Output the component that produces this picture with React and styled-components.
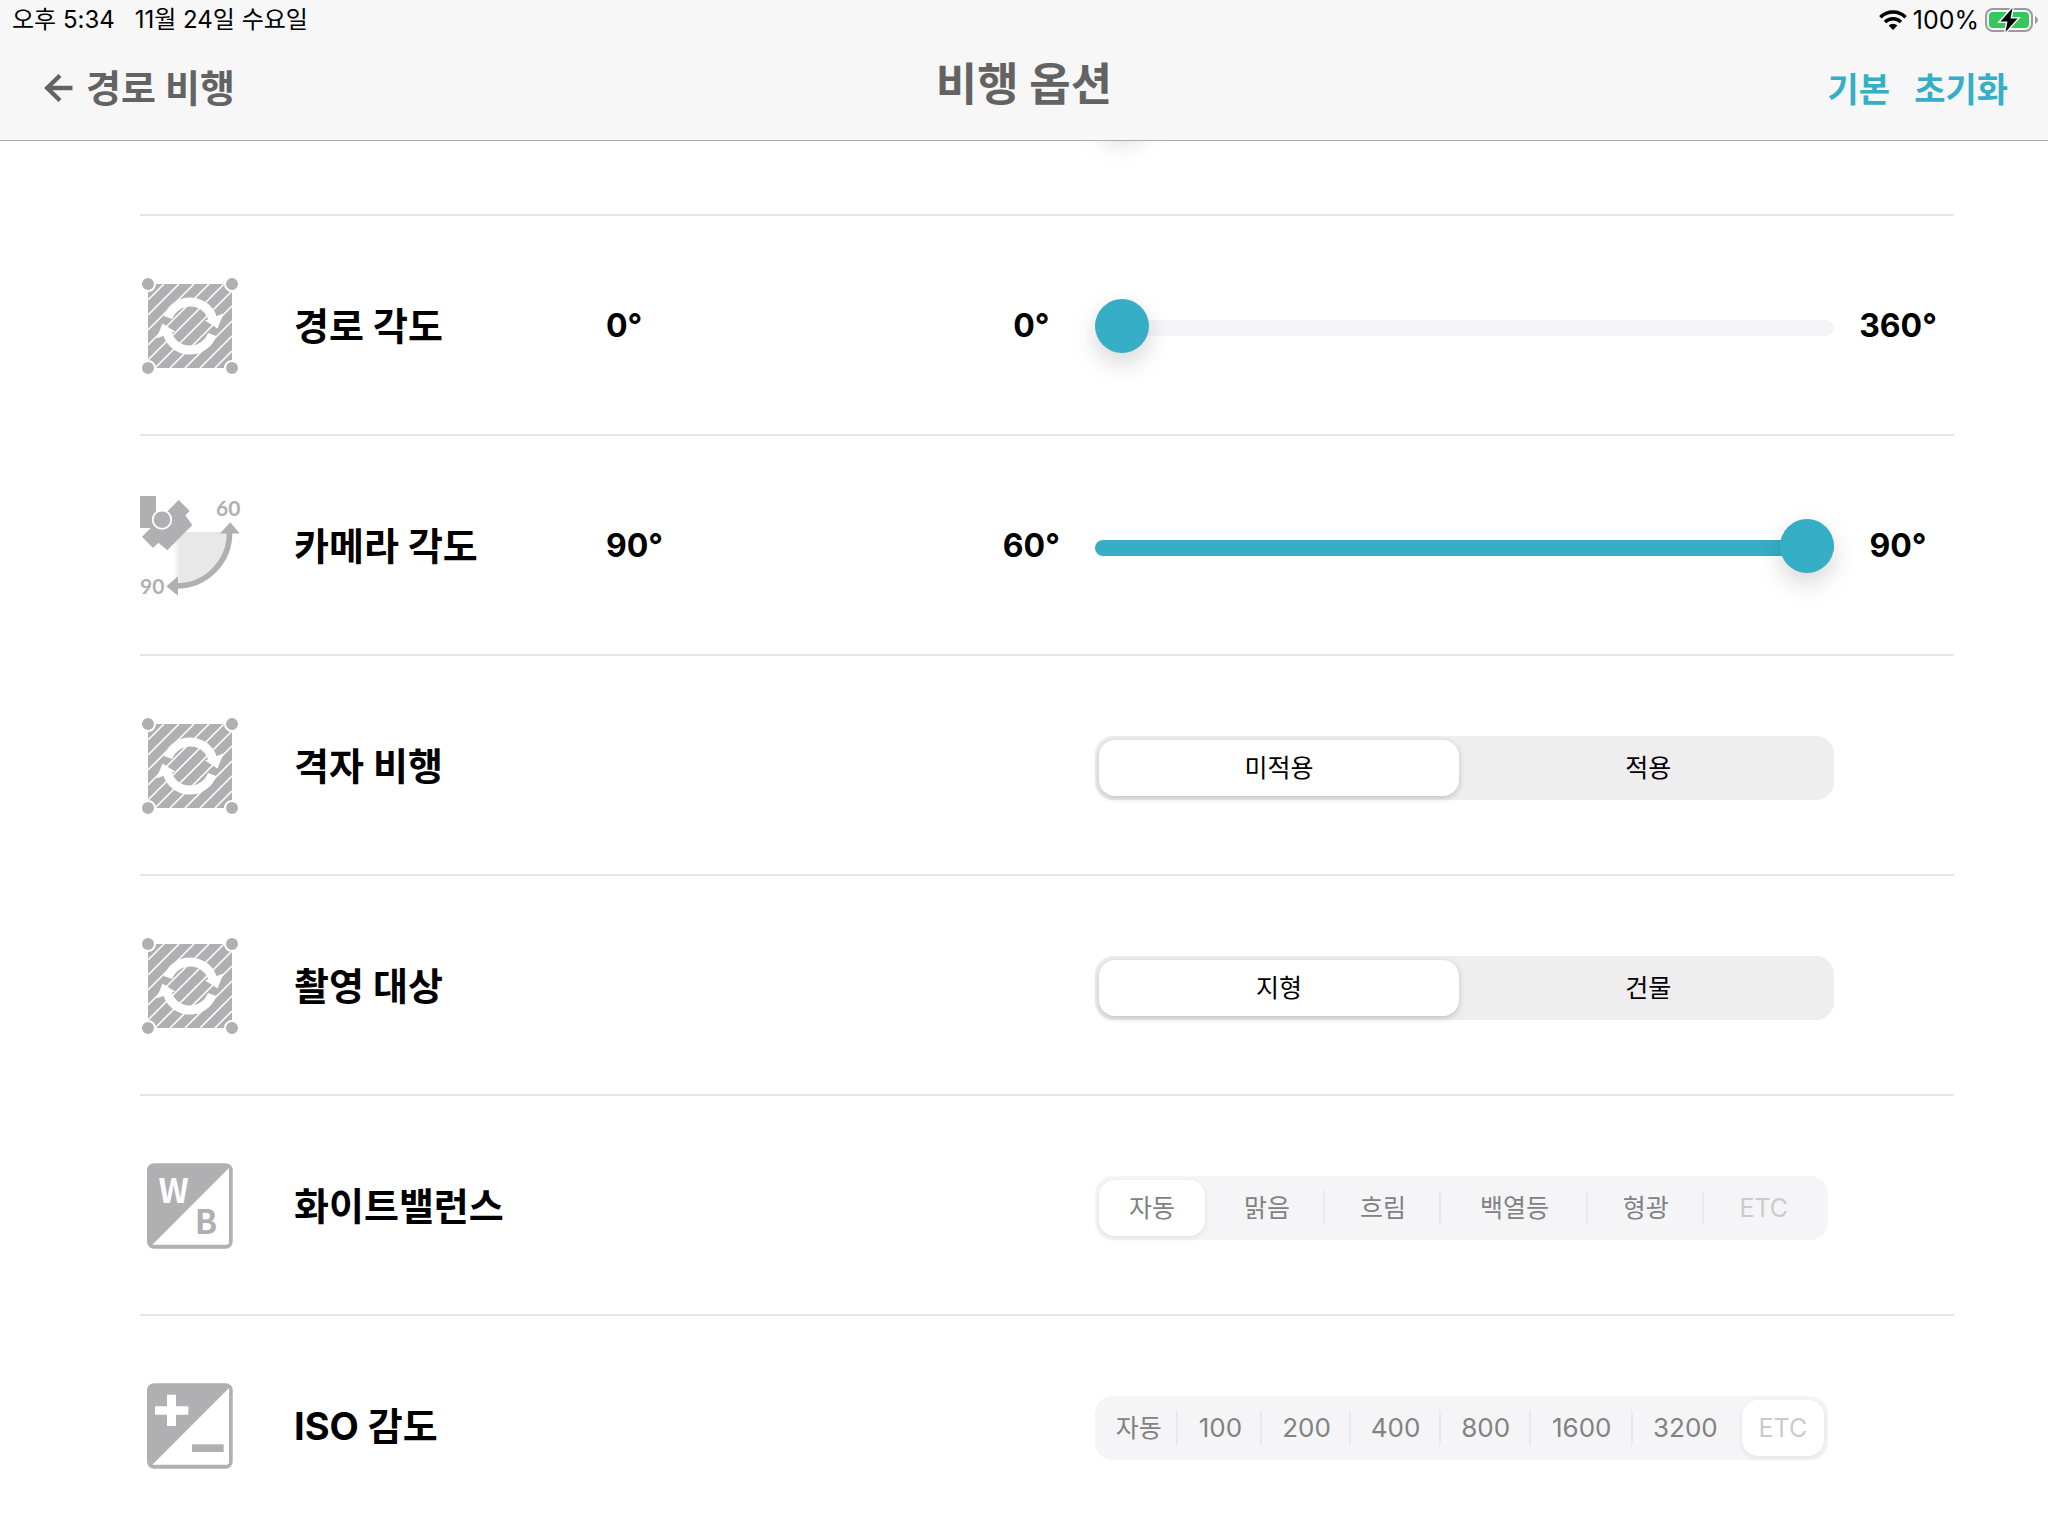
import React, { useState } from 'react';
import styled, { createGlobalStyle } from 'styled-components';

const colors = {
  teal: '#36aec6',
  title: '#636363',
  bar: '#f7f7f7',
  barLine: '#ababab',
  divider: '#e6e6e6',
  track: '#f5f5f7',
  segment: '#eeeeee',
  segmentText: '#828282',
  segmentMuted: '#cbcbcb',
  icon: '#b0b0b2'
};

const fonts = {
  copy: "Inter, 'Noto Sans CJK KR', sans-serif",
  badge: "Lato, 'Noto Sans CJK KR', sans-serif",
  letters: "'Noto Sans CJK KR', sans-serif"
};

const thumbShadow = '0 10px 24px rgba(0, 0, 0, 0.16)';

const GlobalStyle = createGlobalStyle`
  * {
    box-sizing: border-box;
  }
  body {
    margin: 0;
    background: #fff;
    color: #000;
    font-family: ${fonts.copy};
  }
  button,
  input {
    font: inherit;
  }
`;

const Header = styled.header`
  position: relative;
  background: ${colors.bar};
  border-bottom: 1px solid ${colors.barLine};
`;

const StatusBar = styled.div`
  display: flex;
  align-items: center;
  justify-content: space-between;
  height: 40px;
  padding: 0 9px 0 12px;
  font-size: 24px;
  line-height: 40px;
`;

const StatusGroup = styled.div`
  display: flex;
  align-items: center;
  gap: ${({ $gap }) => $gap}px;
`;

const BatteryLevel = styled.span`
  font-size: 25px;
`;

const Nav = styled.nav`
  display: grid;
  grid-template-columns: 1fr auto 1fr;
  align-items: center;
  height: 100px;
  padding: 0 40px 4px;
`;

const BackButton = styled.button`
  display: flex;
  align-items: center;
  justify-self: start;
  gap: 13px;
  padding: 0 0 0 4px;
  border: 0;
  background: none;
  color: ${colors.title};
  font-size: 38px;
  font-weight: 700;
  line-height: 48px;
`;

const Title = styled.h1`
  margin: 0;
  padding-bottom: 6px;
  color: ${colors.title};
  font-size: 45px;
  font-weight: 700;
  line-height: 60px;
`;

const Actions = styled.div`
  display: flex;
  justify-self: end;
  gap: 24px;
  padding-top: 4px;
`;

const ActionButton = styled.button`
  padding: 0;
  border: 0;
  background: none;
  color: ${colors.teal};
  font-size: 34px;
  font-weight: 700;
  line-height: 48px;
`;

const Options = styled.main`
  padding: 0 94px 0 140px;
`;

const Row = styled.section`
  display: grid;
  grid-template-columns: 154px 312px minmax(0, 45fr) 128px minmax(0, 92fr) 120px;
  align-items: center;
  height: 220px;
  padding-top: 2px;
  border-top: 2px solid ${colors.divider};
`;

// the option scrolled under the header, only its thumb shadow shows
const ScrolledRow = styled(Row)`
  align-items: start;
  height: 73px;
  padding: 0;
  border: 0;
  overflow: hidden;
`;

const ScrolledThumb = styled.div`
  grid-column: 5;
  width: 54px;
  height: 54px;
  margin-top: -62px;
  border-radius: 50%;
  background: ${colors.teal};
  box-shadow: ${thumbShadow};
`;

const RowLabel = styled.h2`
  margin: 0;
  font-size: 38px;
  font-weight: 700;
  line-height: 48px;
`;

const Value = styled.output`
  font-size: 32px;
  font-weight: 700;
  line-height: 48px;
`;

const Limit = styled.span`
  padding-left: ${({ $end }) => ($end ? '8px' : '0')};
  font-size: 32px;
  font-weight: 700;
  line-height: 48px;
  text-align: center;
`;

const Control = styled.div`
  grid-column: 5;
  padding-top: 4px;
`;

const Slider = styled.input`
  display: block;
  width: 100%;
  height: 54px;
  margin: 0;
  appearance: none;
  background: none;

  &::-webkit-slider-runnable-track {
    height: 16px;
    border-radius: 8px;
    background: linear-gradient(
      to right,
      ${colors.teal} var(--fill),
      ${colors.track} var(--fill)
    );
  }

  &::-webkit-slider-thumb {
    appearance: none;
    width: 54px;
    height: 54px;
    margin-top: -21px;
    border-radius: 50%;
    background: ${colors.teal};
    box-shadow: ${thumbShadow};
  }
`;

const Segments = styled.div`
  display: grid;
  grid-template-columns: ${({ $columns }) => $columns.map((size) => `${size}fr`).join(' ')};
  width: ${({ $soft }) => ($soft ? 'calc(100% - 6px)' : '100%')};
  height: 64px;
  padding: 4px;
  border-radius: 18px;
  background: ${({ $soft }) => ($soft ? colors.track : colors.segment)};
`;

const Segment = styled.label`
  display: flex;
  align-items: center;
  justify-content: center;
  border-radius: 16px;
  color: ${({ $soft }) => ($soft ? colors.segmentText : '#000')};
  font-size: ${({ $numeric }) => ($numeric ? 26 : 25)}px;
  line-height: 32px;
  white-space: nowrap;
  background: ${({ $line }) =>
    $line ? 'linear-gradient(#e9e9eb, #e9e9eb) right center / 2px 36px no-repeat' : 'none'};

  ${({ $muted }) => $muted && `color: ${colors.segmentMuted};`}

  &:has(input:checked) {
    margin: 0 ${({ $soft }) => ($soft ? 4 : 8)}px;
    background: #fff;
    box-shadow: 0 2px 6px rgba(0, 0, 0, ${({ $soft }) => ($soft ? 0.08 : 0.2)});
  }

  &:first-child:has(input:checked) {
    margin-left: 0;
  }

  &:last-child:has(input:checked) {
    margin-right: 0;
  }

  input {
    position: absolute;
    opacity: 0;
    pointer-events: none;
  }
`;

const Icon = styled.svg`
  display: block;
  width: 100px;
  height: 100px;
  overflow: visible;
`;

const stripes = [32, 47, 62, 77, 92, 107, 122, 137, 152, 167];
const corners = [
  [8, 8],
  [92, 8],
  [8, 92],
  [92, 92]
];

const AreaIcon = () => (
  <Icon viewBox="0 0 100 100" aria-hidden="true">
    <rect x="8" y="8" width="84" height="84" fill={colors.icon} />
    {stripes.map((sum) => {
      const near = Math.max(8, sum - 92);
      return (
        <path
          key={sum}
          d={`M${near} ${sum - near}L${sum - near} ${near}`}
          stroke="#fff"
          strokeWidth="1.6"
        />
      );
    })}
    {[0, 180].map((angle) => (
      <g key={angle} transform={`rotate(${angle} 50 50)`}>
        <path d="M27.9 41.5A23.600 23.600 0 0 1 72.8 43" fill="none" stroke="#fff" strokeWidth="9" />
        <path d="M65 44.5L83.5 37.5L77.5 52.5Z" fill="#fff" />
      </g>
    ))}
    {corners.map(([cx, cy]) => (
      <circle key={`${cx}-${cy}`} cx={cx} cy={cy} r="7" fill={colors.icon} stroke="#fff" strokeWidth="2" />
    ))}
  </Icon>
);

const CameraIcon = () => (
  <Icon viewBox="0 0 100 100" aria-hidden="true">
    <defs>
      <linearGradient id="sweep" x1="0" x2="1">
        <stop offset="0" stopColor="#e8e8e8" stopOpacity="0" />
        <stop offset="0.12" stopColor="#e8e8e8" />
      </linearGradient>
    </defs>
    <path d="M33 36H89A53 53 0 0 1 36 90H33Z" fill="url(#sweep)" />
    <path d="M0 0H16V32H0Z" fill={colors.icon} />
    <path
      d="M38.7 4L49.7 15L45.3 19.3L52.3 29L27.3 54.3L18.3 46.7L13 52L2 40.7Z"
      fill={colors.icon}
    />
    <circle cx="22" cy="23.7" r="9.2" fill={colors.icon} stroke="#fff" strokeWidth="1.8" />
    <path d="M89.5 36A53 53 0 0 1 36.5 90" fill="none" stroke={colors.icon} strokeWidth="5.6" />
    <path d="M80 37.5L90.3 26.3L99.7 37.5Z" fill={colors.icon} />
    <path d="M38 80.3L26.3 90.3L38 99.7Z" fill={colors.icon} />
    <g fill={colors.icon} fontFamily={fonts.badge} fontSize="21" fontWeight="700">
      <text x="76" y="20">60</text>
      <text x="0" y="98">90</text>
    </g>
  </Icon>
);

const SplitFrame = ({ children }) => (
  <Icon viewBox="0 0 100 100" aria-hidden="true">
    <rect x="7" y="7.3" width="85.7" height="85.4" rx="7" fill={colors.icon} />
    <path d="M89 12V86Q89 88.7 86.3 88.7H12.3Z" fill="#fff" />
    {children}
  </Icon>
);

const WhiteBalanceIcon = () => (
  <SplitFrame>
    <g fontFamily={fonts.letters} fontSize="33" fontWeight="700">
      <text x="33.5" y="46.5" fill="#fff" textAnchor="middle">W</text>
      <text x="66" y="78" fill={colors.icon} textAnchor="middle">B</text>
    </g>
  </SplitFrame>
);

const IsoIcon = () => (
  <SplitFrame>
    <path d="M27 18.7H36V30.3H48.3V38.7H36V50H27V38.7H15V30.3H27Z" fill="#fff" />
    <path d="M52 68.3H83.7V76H52Z" fill={colors.icon} />
  </SplitFrame>
);

const BackArrow = () => (
  <svg width="29" height="30" viewBox="0 0 29 30" aria-hidden="true">
    <path d="M28.5 15H3M16 2.5L3.2 15L16 27.5" fill="none" stroke="currentColor" strokeWidth="4.4" />
  </svg>
);

const WifiIcon = () => (
  <svg width="28" height="20" viewBox="0 0 28 20" aria-hidden="true">
    <g fill="none" stroke="#000" strokeWidth="3.6">
      <path d="M1.4 7.2A18 18 0 0 1 26.6 7.2" />
      <path d="M6 12A11.4 11.4 0 0 1 22 12" />
    </g>
    <path d="M14 20L9.6 15.6A6.2 6.2 0 0 1 18.4 15.6Z" />
  </svg>
);

const BatteryIcon = () => (
  <svg width="54" height="26" viewBox="0 0 54 26" aria-hidden="true">
    <rect x="1" y="2" width="46" height="22" rx="7" fill="none" stroke="#9b9b9b" strokeWidth="2" />
    <rect x="4" y="5" width="40" height="16" rx="4" fill="#35c759" />
    <path d="M50 9Q53 10.5 53 13Q53 15.5 50 17Z" fill="#9b9b9b" />
    <path
      d="M27.5 1L15.5 14.6H22.5L20.5 25L32.5 11.4H25.5Z"
      stroke={colors.bar}
      strokeWidth="3"
      paintOrder="stroke"
    />
  </svg>
);

const SliderRow = ({ id, icon, label, min, max, initial }) => {
  const [value, setValue] = useState(initial);
  const fill = `${((value - min) / (max - min)) * 100}%`;
  return (
    <Row>
      {icon}
      <RowLabel as="label" htmlFor={id}>
        {label}
      </RowLabel>
      <Value htmlFor={id}>{value}°</Value>
      <Limit>{min}°</Limit>
      <Control>
        <Slider
          id={id}
          type="range"
          min={min}
          max={max}
          value={value}
          style={{ '--fill': fill }}
          onChange={(event) => setValue(Number(event.target.value))}
        />
      </Control>
      <Limit $end>{max}°</Limit>
    </Row>
  );
};

const SegmentRow = ({ id, icon, label, choices, columns, initial, soft }) => {
  const [selected, setSelected] = useState(initial);
  const selectedIndex = choices.indexOf(selected);
  return (
    <Row>
      {icon}
      <RowLabel id={`${id}-label`}>{label}</RowLabel>
      <Control>
        <Segments role="radiogroup" aria-labelledby={`${id}-label`} $columns={columns} $soft={soft}>
          {choices.map((choice, index) => (
            <Segment
              key={choice}
              $soft={soft}
              $muted={choice === 'ETC'}
              $numeric={/^\d+$/.test(choice)}
              $line={index < choices.length - 1 && index + 1 !== selectedIndex}
            >
              <input
                type="radio"
                name={id}
                checked={choice === selected}
                onChange={() => setSelected(choice)}
              />
              {choice}
            </Segment>
          ))}
        </Segments>
      </Control>
    </Row>
  );
};

const App = () => (
  <>
    <GlobalStyle />
    <Header>
      <StatusBar>
        <StatusGroup $gap={20}>
          <span>오후 5:34</span>
          <span>11월 24일 수요일</span>
        </StatusGroup>
        <StatusGroup $gap={6}>
          <WifiIcon />
          <BatteryLevel>100%</BatteryLevel>
          <BatteryIcon />
        </StatusGroup>
      </StatusBar>
      <Nav>
        <BackButton type="button">
          <BackArrow />
          경로 비행
        </BackButton>
        <Title>비행 옵션</Title>
        <Actions>
          <ActionButton type="button">기본</ActionButton>
          <ActionButton type="button">초기화</ActionButton>
        </Actions>
      </Nav>
    </Header>
    <Options>
      <ScrolledRow as="div" aria-hidden="true">
        <ScrolledThumb />
      </ScrolledRow>
      <SliderRow id="route-angle" icon={<AreaIcon />} label="경로 각도" min={0} max={360} initial={0} />
      <SliderRow id="camera-angle" icon={<CameraIcon />} label="카메라 각도" min={60} max={90} initial={90} />
      <SegmentRow
        id="grid-flight"
        icon={<AreaIcon />}
        label="격자 비행"
        choices={['미적용', '적용']}
        columns={[368, 364]}
        initial="미적용"
      />
      <SegmentRow
        id="target"
        icon={<AreaIcon />}
        label="촬영 대상"
        choices={['지형', '건물']}
        columns={[368, 364]}
        initial="지형"
      />
      <SegmentRow
        id="white-balance"
        icon={<WhiteBalanceIcon />}
        label="화이트밸런스"
        choices={['자동', '맑음', '흐림', '백열등', '형광', 'ETC']}
        columns={[110, 117, 116, 148, 116, 121]}
        initial="자동"
        soft
      />
      <SegmentRow
        id="iso"
        icon={<IsoIcon />}
        label="ISO 감도"
        choices={['자동', '100', '200', '400', '800', '1600', '3200', 'ETC']}
        columns={[79, 84, 88, 90, 90, 102, 105, 86]}
        initial="ETC"
        soft
      />
    </Options>
  </>
);

export default App;
